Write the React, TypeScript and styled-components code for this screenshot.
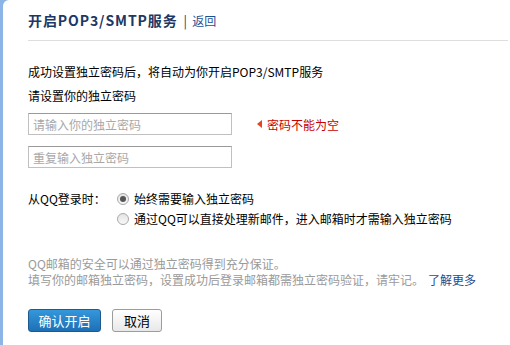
import styled, { createGlobalStyle } from "styled-components";

const GlobalStyle = createGlobalStyle`
  html, body {
    margin: 0;
    padding: 0;
    background: #8db4e7;
  }
  body {
    font-family: "Noto Sans CJK SC", "DejaVu Sans", sans-serif;
    font-size: 12px;
    color: #000;
  }
`;

export default function App() {
  return (
    <>
      <GlobalStyle />
      <Panel>
        <Header>
          <Title>开启POP3/SMTP服务</Title>
          <Divider>|</Divider>
          <Link href="#">返回</Link>
        </Header>

        <Text>成功设置独立密码后，将自动为你开启POP3/SMTP服务</Text>
        <Text>请设置你的独立密码</Text>

        <FieldRow $top={5}>
          <Input type="password" placeholder="请输入你的独立密码" />
          <ErrorTip>密码不能为空</ErrorTip>
        </FieldRow>
        <FieldRow $top={11}>
          <Input type="password" placeholder="重复输入独立密码" />
        </FieldRow>

        <LoginOptions>
          <OptionLabel>从QQ登录时：</OptionLabel>
          <OptionList>
            <Option>
              <Radio $checked />
              始终需要输入独立密码
            </Option>
            <Option>
              <Radio />
              通过QQ可以直接处理新邮件，进入邮箱时才需输入独立密码
            </Option>
          </OptionList>
        </LoginOptions>

        <Note>
          QQ邮箱的安全可以通过独立密码得到充分保证。
          <br />
          填写你的邮箱独立密码，设置成功后登录邮箱都需独立密码验证，请牢记。
          <MoreLink href="#">了解更多</MoreLink>
        </Note>

        <Actions>
          <PrimaryButton>确认开启</PrimaryButton>
          <Button>取消</Button>
        </Actions>
      </Panel>
    </>
  );
}

const Panel = styled.div`
  margin-left: 3px;
  min-height: 345px;
  box-sizing: border-box;
  background: #fff;
  border-top-left-radius: 6px;
  padding: 0 2px 0 25px;
`;

const Header = styled.div`
  display: flex;
  align-items: center;
  height: 20px;
  padding: 10px 0;
  border-bottom: 1px solid #dedede;
  margin-bottom: 19px;
`;

const Title = styled.span`
  font-size: 14px;
  font-weight: 700;
  letter-spacing: 0.9px;
  color: #1b3866;
`;

const Divider = styled.span`
  margin: 0 5px 0 6px;
  color: #1b3866;
  font-size: 13px;
`;

const Link = styled.a`
  color: #1e4f92;
  font-size: 12px;
  text-decoration: none;
`;

const Text = styled.div`
  line-height: 24px;
`;

const FieldRow = styled.div<{ $top: number }>`
  display: flex;
  align-items: center;
  margin-top: ${({ $top }) => $top}px;
`;

const Input = styled.input`
  box-sizing: border-box;
  width: 204px;
  height: 22px;
  margin: 0;
  padding: 0 4px;
  border: 1px solid #c0c0c0;
  border-top-color: #9a9a9a;
  font-family: inherit;
  font-size: 12px;
  outline: none;

  &::placeholder {
    color: #a8a8a8;
  }
`;

const ErrorTip = styled.span`
  position: relative;
  margin-left: 35px;
  color: #c80000;
  font-size: 12px;

  &::before {
    content: "";
    position: absolute;
    left: -10px;
    top: 50%;
    margin-top: -4px;
    border-style: solid;
    border-width: 4px 5px 4px 0;
    border-color: transparent #e8431c transparent transparent;
  }
`;

const LoginOptions = styled.div`
  display: flex;
  margin-top: 21px;
`;

const OptionLabel = styled.div`
  width: 89px;
  line-height: 20px;
`;

const OptionList = styled.div`
  display: flex;
  flex-direction: column;
`;

const Option = styled.label`
  display: flex;
  align-items: center;
  gap: 5px;
  line-height: 20px;
`;

const Radio = styled.span<{ $checked?: boolean }>`
  position: relative;
  display: inline-block;
  box-sizing: border-box;
  width: 12px;
  height: 12px;
  border-radius: 50%;
  border: 1px solid #a9a9a9;
  background: linear-gradient(#e4e4e4, #f8f8f8);

  &::after {
    content: "";
    display: ${({ $checked }) => ($checked ? "block" : "none")};
    position: absolute;
    left: 2px;
    top: 2px;
    width: 6px;
    height: 6px;
    border-radius: 50%;
    background: #555;
  }
`;

const Note = styled.div`
  margin-top: 27px;
  line-height: 16px;
  color: #9a9a9a;
`;

const MoreLink = styled.a`
  margin-left: 4px;
  color: #1d4c8f;
  text-decoration: none;
`;

const Actions = styled.div`
  display: flex;
  gap: 11px;
  margin-top: 21px;
`;

const Button = styled.button`
  box-sizing: border-box;
  height: 23px;
  padding: 0 11px;
  border: 1px solid #9c9c9c;
  border-radius: 3px;
  background: linear-gradient(#ffffff, #e8e8e8);
  font-family: inherit;
  font-size: 13px;
  color: #000;
`;

const PrimaryButton = styled(Button)`
  width: 73px;
  padding: 0;
  border-color: #1c5a90;
  background: linear-gradient(#3597dc, #1e70b5);
  color: #fff;
`;
